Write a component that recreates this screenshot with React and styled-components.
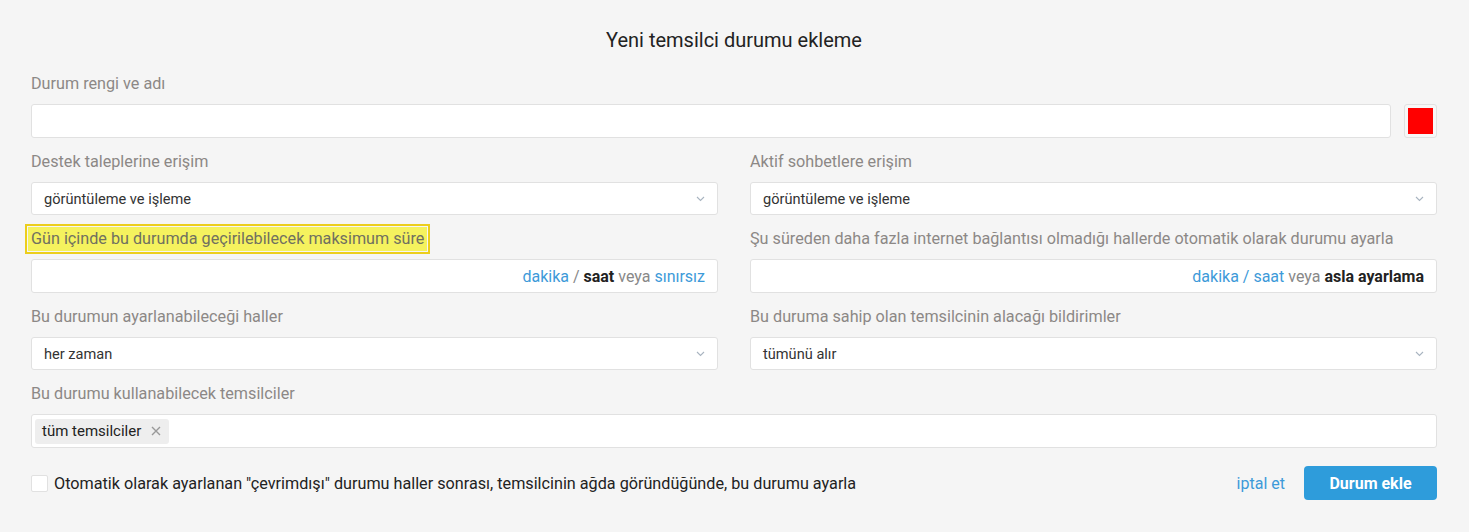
import React from 'react';
import styled, { createGlobalStyle } from 'styled-components';

const Global = createGlobalStyle`
    body {
        margin:0;
        background:#f5f5f5;
        font-family:Roboto, "Liberation Sans", sans-serif;
    }
`;

const Page = styled.div`
    padding:28px 32px 0 31px;
    display:flex;
    flex-direction:column;
`;

const Title = styled.h1`
    margin:0 0 22px;
    text-align:center;
    font-size:20px;
    line-height:24px;
    font-weight:400;
    color:#222;
`;

const Field = styled.div`
    display:flex;
    flex-direction:column;
    margin-bottom:14px;
    min-width:0;
`;

const Label = styled.div`
    font-size:16.2px;
    line-height:20px;
    color:#8c8886;
    margin-bottom:10px;
    align-self:flex-start;
    white-space:nowrap;
    ${p => p.$marked && `
        background:#f5f25e;
        outline:2px solid #ecce1c;
        outline-offset:1px;
        margin-left:-3px;
        padding:2px 3px;
        margin-top:-2px;
        margin-bottom:8px;
        color:#707060;
    `}
`;

const Grid = styled.div`
    display:grid;
    grid-template-columns:1fr 1fr;
    column-gap:32px;
`;

const NameRow = styled.div`
    display:flex;
    gap:13px;
`;

const Input = styled.div`
    flex:${p => (p.$grow ? 1 : 'none')};
    height:34px;
    box-sizing:border-box;
    background:#fff;
    border:1px solid #e1e1e1;
    border-radius:3px;
    display:flex;
    align-items:center;
    justify-content:${p => (p.$end ? 'flex-end' : 'flex-start')};
    padding:0 12px;
    font-size:14.6px;
    color:#333;
`;

const Swatch = styled.div`
    width:33px;
    height:34px;
    box-sizing:border-box;
    border:1px solid #e1e1e1;
    border-radius:3px;
    padding:3px;
    background:#f7f7f7;
    & > div {
        width:100%;
        height:100%;
        background:#ff0000;
    }
`;

const Select = styled(Input)`
    justify-content:space-between;
    height:33px;
`;

const Unit = styled.span`
    font-size:16px;
    color:${p => (p.$link ? '#3d9ad9' : p.$bold ? '#222' : '#888')};
    font-weight:${p => (p.$bold ? 700 : 400)};
    white-space:pre;
`;

const TagBox = styled(Input)`
    padding:0 3px;
`;

const Tag = styled.span`
    background:#eee;
    border-radius:3px;
    padding:0 8px 0 7px;
    height:25px;
    display:inline-flex;
    align-items:center;
    gap:10px;
    font-size:15px;
    color:#222;
`;

const Footer = styled.div`
    display:flex;
    align-items:center;
    margin-top:4px;
    gap:19px;
`;

const Check = styled.label`
    flex:1;
    display:flex;
    align-items:center;
    gap:6px;
    font-size:16.2px;
    color:#222;
    & span.box {
        width:17px;
        height:17px;
        box-sizing:border-box;
        background:#fff;
        border:1px solid #e1e1e1;
        border-radius:2px;
    }
`;

const Cancel = styled.a`
    font-size:16px;
    color:#3d9ad9;
    text-decoration:none;
`;

const Button = styled.button`
    width:133px;
    height:34px;
    border:0;
    border-radius:4px;
    background:#2e9cdb;
    color:#fff;
    font-family:inherit;
    font-size:16px;
    font-weight:700;
`;

const Chevron = () => (
    <svg width="9" height="6" viewBox="0 0 9 6">
        <path d="M1 1l3.5 3.5L8 1" fill="none" stroke="#a8b4c0" strokeWidth="1.1" />
    </svg>
);

const Cross = () => (
    <svg width="10" height="10" viewBox="0 0 10 10">
        <path d="M1 1l8 8M9 1l-8 8" stroke="#999" strokeWidth="1.4" />
    </svg>
);

const Dropdown = ({ value }) => (
    <Select>
        <span>{value}</span>
        <Chevron />
    </Select>
);

const App = () => {
    return (
        <Page>
            <Global />
            <Title>Yeni temsilci durumu ekleme</Title>
            <Field>
                <Label>Durum rengi ve adı</Label>
                <NameRow>
                    <Input $grow />
                    <Swatch><div /></Swatch>
                </NameRow>
            </Field>
            <Grid>
                <Field>
                    <Label>Destek taleplerine erişim</Label>
                    <Dropdown value="görüntüleme ve işleme" />
                </Field>
                <Field>
                    <Label>Aktif sohbetlere erişim</Label>
                    <Dropdown value="görüntüleme ve işleme" />
                </Field>
                <Field>
                    <Label $marked>Gün içinde bu durumda geçirilebilecek maksimum süre</Label>
                    <Input $end>
                        <Unit $link>dakika</Unit>
                        <Unit> / </Unit>
                        <Unit $bold>saat</Unit>
                        <Unit> veya </Unit>
                        <Unit $link>sınırsız</Unit>
                    </Input>
                </Field>
                <Field>
                    <Label>Şu süreden daha fazla internet bağlantısı olmadığı hallerde otomatik olarak durumu ayarla</Label>
                    <Input $end>
                        <Unit $link>dakika</Unit>
                        <Unit $link> / </Unit>
                        <Unit $link>saat</Unit>
                        <Unit> veya </Unit>
                        <Unit $bold>asla ayarlama</Unit>
                    </Input>
                </Field>
                <Field>
                    <Label>Bu durumun ayarlanabileceği haller</Label>
                    <Dropdown value="her zaman" />
                </Field>
                <Field>
                    <Label>Bu duruma sahip olan temsilcinin alacağı bildirimler</Label>
                    <Dropdown value="tümünü alır" />
                </Field>
            </Grid>
            <Field>
                <Label>Bu durumu kullanabilecek temsilciler</Label>
                <TagBox>
                    <Tag>tüm temsilciler <Cross /></Tag>
                </TagBox>
            </Field>
            <Footer>
                <Check>
                    <span className="box" />
                    Otomatik olarak ayarlanan "çevrimdışı" durumu haller sonrası, temsilcinin ağda göründüğünde, bu durumu ayarla
                </Check>
                <Cancel href="#">iptal et</Cancel>
                <Button>Durum ekle</Button>
            </Footer>
        </Page>
    );
}

export default App;
